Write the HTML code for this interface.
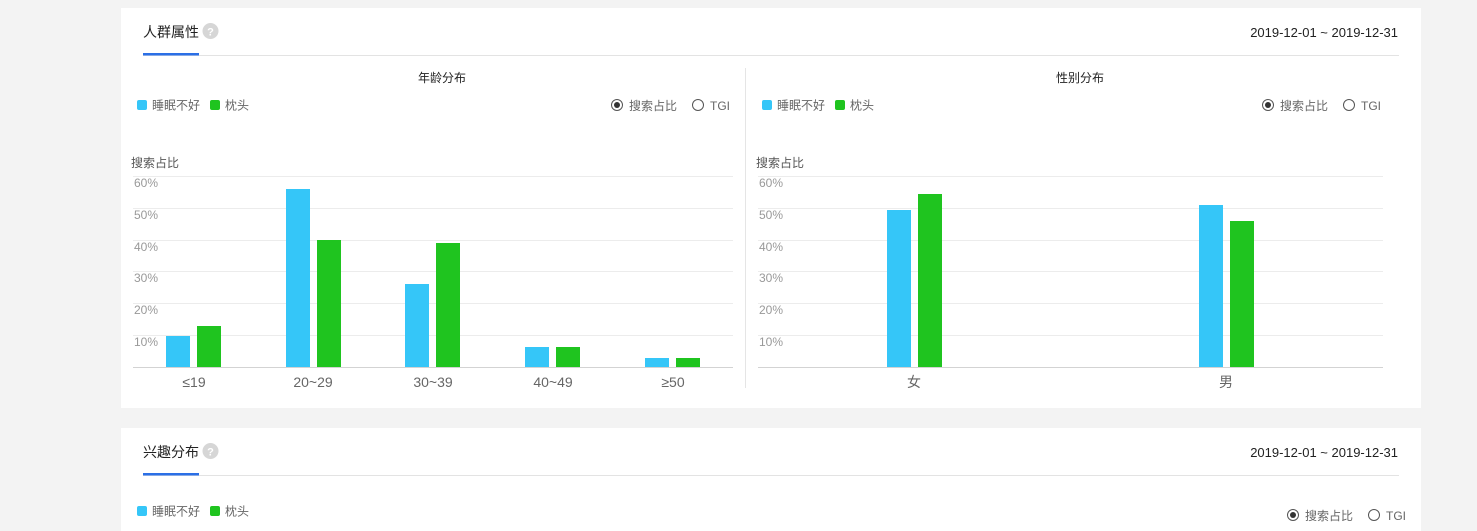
<!DOCTYPE html>
<html><head><meta charset="utf-8">
<style>
html,body{margin:0;padding:0;background:#f3f3f3;width:1477px;height:531px;overflow:hidden}
svg{display:block;font-family:"Liberation Sans","Noto Sans CJK SC",sans-serif}
</style></head><body>
<svg width="1477" height="531" viewBox="0 0 1477 531" xmlns="http://www.w3.org/2000/svg">
<rect x="0" y="0" width="1477" height="531" fill="#f3f3f3"/>
<rect x="121" y="8" width="1300" height="400" fill="#fff"/>
<rect x="121" y="428" width="1300" height="110" fill="#fff"/>

<!-- Panel 1 header -->
<text x="143" y="37" font-size="14" fill="#222">人群属性</text>
<circle cx="210.5" cy="31" r="8" fill="#d6d6d6"/>
<text x="210.5" y="35.5" font-size="11" font-weight="bold" fill="#fff" text-anchor="middle">?</text>
<rect x="143" y="55" width="1256" height="1" fill="#e3e3e3"/>
<rect x="143" y="53" width="56" height="2.5" fill="#2b6fe6"/>
<text x="1398" y="37" font-size="13" fill="#222" text-anchor="end">2019-12-01 ~ 2019-12-31</text>

<!-- divider -->
<rect x="745" y="68" width="1" height="320" fill="#e5e5e5"/>

<!-- Left chart -->
<text x="442" y="82" font-size="12" fill="#222" text-anchor="middle">年龄分布</text>
<rect x="137" y="100" width="10" height="10" rx="2" fill="#35c6f8"/>
<text x="152" y="109.5" font-size="12" fill="#666">睡眠不好</text>
<rect x="210" y="100" width="10" height="10" rx="2" fill="#1fc41f"/>
<text x="225" y="109.5" font-size="12" fill="#666">枕头</text>
<circle cx="617" cy="105" r="5.5" fill="none" stroke="#555" stroke-width="1"/>
<circle cx="617" cy="105" r="3" fill="#333"/>
<text x="629" y="110" font-size="12" fill="#666">搜索占比</text>
<circle cx="698" cy="105" r="5.5" fill="none" stroke="#555" stroke-width="1"/>
<text x="710" y="110" font-size="12" fill="#666">TGI</text>

<text x="131" y="167" font-size="12" fill="#555">搜索占比</text>
<g fill="#ececec">
<rect x="133" y="176" width="600" height="1"/>
<rect x="133" y="208" width="600" height="1"/>
<rect x="133" y="240" width="600" height="1"/>
<rect x="133" y="271" width="600" height="1"/>
<rect x="133" y="303" width="600" height="1"/>
<rect x="133" y="335" width="600" height="1"/>
</g>
<rect x="133" y="367" width="600" height="1" fill="#d3d3d3"/>
<g font-size="12" fill="#999">
<text x="134" y="187">60%</text><text x="134" y="219">50%</text><text x="134" y="251">40%</text>
<text x="134" y="282">30%</text><text x="134" y="314">20%</text><text x="134" y="346">10%</text>
</g>
<g fill="#35c6f8">
<rect x="166" y="336" width="24" height="31"/>
<rect x="286" y="189" width="24" height="178"/>
<rect x="405" y="284" width="24" height="83"/>
<rect x="525" y="347" width="24" height="20"/>
<rect x="645" y="358" width="24" height="9"/>
</g>
<g fill="#1fc41f">
<rect x="197" y="326" width="24" height="41"/>
<rect x="317" y="240" width="24" height="127"/>
<rect x="436" y="243" width="24" height="124"/>
<rect x="556" y="347" width="24" height="20"/>
<rect x="676" y="358" width="24" height="9"/>
</g>
<g font-size="14" fill="#666" text-anchor="middle">
<text x="194" y="387">≤19</text><text x="313" y="387">20~29</text><text x="433" y="387">30~39</text>
<text x="553" y="387">40~49</text><text x="673" y="387">≥50</text>
</g>

<!-- Right chart -->
<text x="1080" y="82" font-size="12" fill="#222" text-anchor="middle">性别分布</text>
<rect x="762" y="100" width="10" height="10" rx="2" fill="#35c6f8"/>
<text x="777" y="109.5" font-size="12" fill="#666">睡眠不好</text>
<rect x="835" y="100" width="10" height="10" rx="2" fill="#1fc41f"/>
<text x="850" y="109.5" font-size="12" fill="#666">枕头</text>
<circle cx="1268" cy="105" r="5.5" fill="none" stroke="#555" stroke-width="1"/>
<circle cx="1268" cy="105" r="3" fill="#333"/>
<text x="1280" y="110" font-size="12" fill="#666">搜索占比</text>
<circle cx="1349" cy="105" r="5.5" fill="none" stroke="#555" stroke-width="1"/>
<text x="1361" y="110" font-size="12" fill="#666">TGI</text>

<text x="756" y="167" font-size="12" fill="#555">搜索占比</text>
<g fill="#ececec">
<rect x="758" y="176" width="625" height="1"/>
<rect x="758" y="208" width="625" height="1"/>
<rect x="758" y="240" width="625" height="1"/>
<rect x="758" y="271" width="625" height="1"/>
<rect x="758" y="303" width="625" height="1"/>
<rect x="758" y="335" width="625" height="1"/>
</g>
<rect x="758" y="367" width="625" height="1" fill="#d3d3d3"/>
<g font-size="12" fill="#999">
<text x="759" y="187">60%</text><text x="759" y="219">50%</text><text x="759" y="251">40%</text>
<text x="759" y="282">30%</text><text x="759" y="314">20%</text><text x="759" y="346">10%</text>
</g>
<rect x="887" y="210" width="24" height="157" fill="#35c6f8"/>
<rect x="918" y="194" width="24" height="173" fill="#1fc41f"/>
<rect x="1199" y="205" width="24" height="162" fill="#35c6f8"/>
<rect x="1230" y="221" width="24" height="146" fill="#1fc41f"/>
<g font-size="14" fill="#666" text-anchor="middle">
<text x="914" y="387">女</text><text x="1226" y="387">男</text>
</g>

<!-- Panel 2 -->
<text x="143" y="457" font-size="14" fill="#222">兴趣分布</text>
<circle cx="210.5" cy="451" r="8" fill="#d6d6d6"/>
<text x="210.5" y="455.5" font-size="11" font-weight="bold" fill="#fff" text-anchor="middle">?</text>
<rect x="143" y="475" width="1256" height="1" fill="#e3e3e3"/>
<rect x="143" y="473" width="56" height="2.5" fill="#2b6fe6"/>
<text x="1398" y="457" font-size="13" fill="#222" text-anchor="end">2019-12-01 ~ 2019-12-31</text>
<rect x="137" y="506" width="10" height="10" rx="2" fill="#35c6f8"/>
<text x="152" y="515.5" font-size="12" fill="#666">睡眠不好</text>
<rect x="210" y="506" width="10" height="10" rx="2" fill="#1fc41f"/>
<text x="225" y="515.5" font-size="12" fill="#666">枕头</text>
<circle cx="1293" cy="515" r="5.5" fill="none" stroke="#555" stroke-width="1"/>
<circle cx="1293" cy="515" r="3" fill="#333"/>
<text x="1305" y="520" font-size="12" fill="#666">搜索占比</text>
<circle cx="1374" cy="515" r="5.5" fill="none" stroke="#555" stroke-width="1"/>
<text x="1386" y="520" font-size="12" fill="#666">TGI</text>
</svg>
</body></html>
